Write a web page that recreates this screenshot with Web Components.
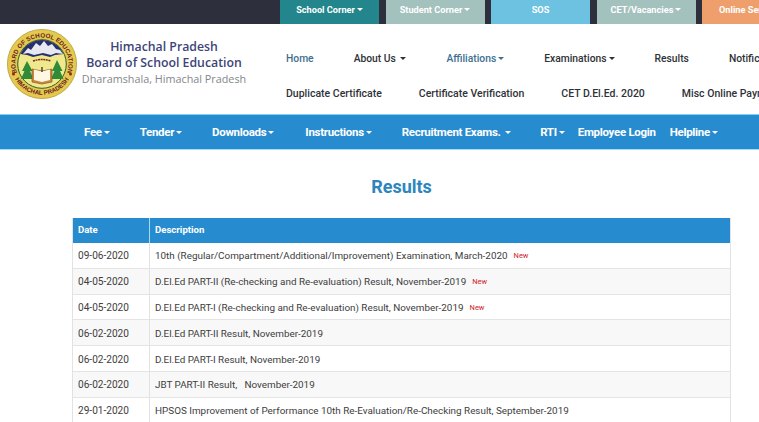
<!DOCTYPE html>
<html lang="en"><head><meta charset="utf-8"><title>Results</title>
<style>
html,body{margin:0;padding:0;background:#fff;overflow:hidden;height:422px}
body{font-family:Roboto,"Liberation Sans",sans-serif;width:759px}
</style></head><body>
<hp-topbar>
  <hp-tab color="#22868c" caret>School Corner</hp-tab>
  <hp-tab color="#a3c1bd" caret>Student Corner</hp-tab>
  <hp-tab color="#6dc2e2">SOS</hp-tab>
  <hp-tab color="#a3c1bd" caret>CET/Vacancies</hp-tab>
  <hp-tab color="#ee9f6c" caret>Online Services</hp-tab>
</hp-topbar>
<hp-header></hp-header>
<hp-mainnav></hp-mainnav>
<hp-results></hp-results>
<script>
const caret = c => `<span style="display:inline-block;width:0;height:0;border-left:3px solid transparent;border-right:3px solid transparent;border-top:3px solid ${c};vertical-align:2px;margin-left:2px"></span>`;

customElements.define('hp-topbar', class extends HTMLElement{
  constructor(){super();this.attachShadow({mode:'open'}).innerHTML=`<style>
  :host{display:flex;height:24px;background:#2d2f3d;padding-left:280px;gap:6.5px;overflow:hidden}
  </style><slot></slot>`;}
});
customElements.define('hp-tab', class extends HTMLElement{
  constructor(){super();this.attachShadow({mode:'open'});}
  connectedCallback(){
    this.shadowRoot.innerHTML=`<style>
    :host{display:flex;flex:none;width:99px;height:24px;align-items:center;justify-content:center;color:#fff;font-size:9.2px;font-weight:700;background:${this.getAttribute('color')};white-space:nowrap;overflow:hidden;padding-bottom:5px;box-sizing:border-box}
    :host(:last-child){width:110px;justify-content:flex-start;padding-left:17px}
    </style><slot></slot>${this.hasAttribute('caret')?caret('#fff'):''}`;
  }
});
customElements.define('hp-logo', class extends HTMLElement{
  constructor(){super();this.attachShadow({mode:'open'}).innerHTML=`<style>
  :host{display:block;width:70px;height:72px;flex:none}svg{display:block}
  text{font-family:"Liberation Sans",sans-serif;font-weight:700;fill:#6b1d1d}
  </style>
  <svg width="70" height="72" viewBox="0 0 70 72">
   <defs>
    <path id="t" d="M13.300 51.200A26.500 26.500 0 1 1 56.700 51.200"/>
    <path id="b" d="M4.500 41.400A31 31 0 0 0 65.500 41.400"/>
   </defs>
   <circle cx="35" cy="36" r="34.600" fill="#e3c94e" stroke="#b69c3a" stroke-width=".8"/>
   <circle cx="35" cy="36" r="24.300" fill="#f0e88c" stroke="#2f5f2e" stroke-width="1"/>
   <path d="M13.500 26A23.500 23.500 0 0 1 56.500 26L48 27 43 29 35 27 26 29 20 27Z" fill="#27306e"/>
   <path d="M16 26l5-6 3 2 5-7 4 3 4-5 4 5 4-2 4 5 4 1 3 4-7-1-5 2-8-2-9 2-6-2z" fill="#e8e8f0"/>
   <path d="M20 33l-5 10h2.500l-3.500 8h12.500l-3.500-8h2.500z" fill="#2f8a3a"/>
   <path d="M50 32l-5 11h2.500l-3.500 8h12.500l-3.500-8h2.500z" fill="#2f8a3a"/>
   <path d="M25 41l10 2 10-2v13l-10 2-10-2z" fill="#c98a3c" stroke="#7a4a1e" stroke-width=".6"/>
   <path d="M27 41.500l8 2v10.500l-8-2zM43 41.500l-8 2v10.500l8-2z" fill="#fdf7e3"/>
   <path d="M35 39v5" stroke="#333" stroke-width="1.300"/>
   <path d="M26 33q9-3 18 0" stroke="#7a2a1e" stroke-width="1.500" fill="none" stroke-dasharray="2 .6"/>
   <text font-size="6.300"><textPath href="#t" startOffset="50%" text-anchor="middle">BOARD OF SCHOOL EDUCATION</textPath></text>
   <text font-size="6.200"><textPath href="#b" startOffset="50%" text-anchor="middle">HIMACHAL PRADESH</textPath></text>
   <circle cx="6.500" cy="46" r="1.500" fill="#a02020"/><circle cx="63.500" cy="46" r="1.500" fill="#a02020"/>
  </svg>`;}
});
customElements.define('hp-header', class extends HTMLElement{
  constructor(){super();this.attachShadow({mode:'open'}).innerHTML=`<style>
  :host{display:flex;height:90px;background:#fff;overflow:hidden;box-sizing:border-box}
  .brand{flex:none;width:286px;display:flex;padding:4px 0 0 7px;box-sizing:border-box;gap:2px}
  .txt{width:170px;padding-top:11px;text-align:center;font-family:"Open Sans","Noto Sans",sans-serif;white-space:nowrap}
  .a{font-size:12.300px;font-weight:600;line-height:16px;color:#3d4478}
  .b{font-size:10.800px;font-weight:400;line-height:16px;color:#83868c}
  .rows{flex:1;min-width:0;overflow:hidden}
  .r{display:flex;white-space:nowrap;font-weight:500;color:#2e3238;align-items:center}
  .r1{height:22px;margin-top:23px;gap:40px;font-size:10.300px}
  .r2{height:22px;margin-top:13px;gap:37px;font-size:10.500px}
  .bl{color:#41708f}
  </style>
  <div class="brand"><hp-logo></hp-logo><div class="txt"><div class="a">Himachal Pradesh</div><div class="a">Board of School Education</div><div class="b">Dharamshala, Himachal Pradesh</div></div></div>
  <div class="rows">
   <div class="r r1"><span class="bl">Home</span><span>About Us ${caret('#2e3238')}</span><span class="bl">Affiliations${caret('#41708f')}</span><span>Examinations${caret('#2e3238')}</span><span>Results</span><span>Notifications</span></div>
   <div class="r r2"><span>Duplicate Certificate</span><span>Certificate Verification</span><span>CET D.El.Ed. 2020</span><span>Misc Online Payment</span></div>
  </div>`;}
});
customElements.define('hp-mainnav', class extends HTMLElement{
  constructor(){super();
  const items=[['Fee',1,30],['Tender',1,30],['Downloads',1,31],['Instructions',1,30],['Recruitment Exams. ',1,29],['RTI',1,13],['Employee Login',0,14],['Helpline',1,0]];
  this.attachShadow({mode:'open'}).innerHTML=`<style>
  :host{display:flex;align-items:center;height:36px;box-sizing:border-box;padding:0 0 1px 84px;background:#268ccf;border-top:1px solid #7fd0f5;border-bottom:1px solid #a5dcf5;color:#fff;font-size:11.500px;font-weight:700;white-space:nowrap;overflow:hidden}
  </style>`+items.map(([t,c,m])=>`<span style="margin-right:${m}px;letter-spacing:-.3px">${t}${c?caret('#fff'):''}</span>`).join('');}
});
customElements.define('hp-row', class extends HTMLElement{
  constructor(){super();this.attachShadow({mode:'open'});}
  connectedCallback(){
    const isNew=this.hasAttribute('new');
    this.shadowRoot.innerHTML=`<style>
    :host{display:grid;grid-template-columns:77px 1fr;height:25.800px;box-sizing:border-box;border-bottom:1px solid #e4e4e4;background:#fff;font-size:9.900px;color:#3d3d3d;white-space:pre}
    :host(:nth-child(odd)){background:#f8f8f8}
    div{display:flex;align-items:center;padding:1px 0 0 5px;box-sizing:border-box}
    .d{border-right:1px solid #e2e2e2;font-size:10.100px}
    .n{color:#d0232b;font-size:7.500px;margin-left:6px}
    </style><div class="d">${this.getAttribute('date')}</div><div><slot></slot>${isNew?'<span class="n">New</span>':''}</div>`;
  }
});
customElements.define('hp-results', class extends HTMLElement{
  constructor(){super();this.attachShadow({mode:'open'}).innerHTML=`<style>
  :host{display:block;padding:0 28px 0 72px}
  h1{margin:0;height:68px;padding-top:26px;box-sizing:border-box;text-align:center;font-size:18px;line-height:22px;font-weight:700;color:#2c86bd}
  .t{border:1px solid #e2e2e2;border-top:0;border-bottom:0}
  .h{display:grid;grid-template-columns:77px 1fr;height:25px;background:#268ccf;color:#fff;font-size:9.600px;font-weight:700;box-sizing:border-box}
  .h div{display:flex;align-items:center;padding:0 0 2px 5px;box-sizing:border-box}
  .h div:first-child{border-right:1px solid #a5dcf5}
  </style>
  <h1>Results</h1>
  <div class="t"><div class="h"><div>Date</div><div>Description</div></div>
  <hp-row date="09-06-2020" new>10th (Regular/Compartment/Additional/Improvement) Examination, March-2020</hp-row>
  <hp-row date="04-05-2020" new>D.El.Ed PART-II (Re-checking and Re-evaluation) Result, November-2019</hp-row>
  <hp-row date="04-05-2020" new>D.El.Ed PART-I (Re-checking and Re-evaluation) Result, November-2019</hp-row>
  <hp-row date="06-02-2020">D.El.Ed PART-II Result, November-2019</hp-row>
  <hp-row date="06-02-2020">D.El.Ed PART-I Result, November-2019</hp-row>
  <hp-row date="06-02-2020">JBT PART-II Result,   November-2019</hp-row>
  <hp-row date="29-01-2020">HPSOS Improvement of Performance 10th Re-Evaluation/Re-Checking Result, September-2019</hp-row>
  </div>`;}
});
</script>
</body></html>
